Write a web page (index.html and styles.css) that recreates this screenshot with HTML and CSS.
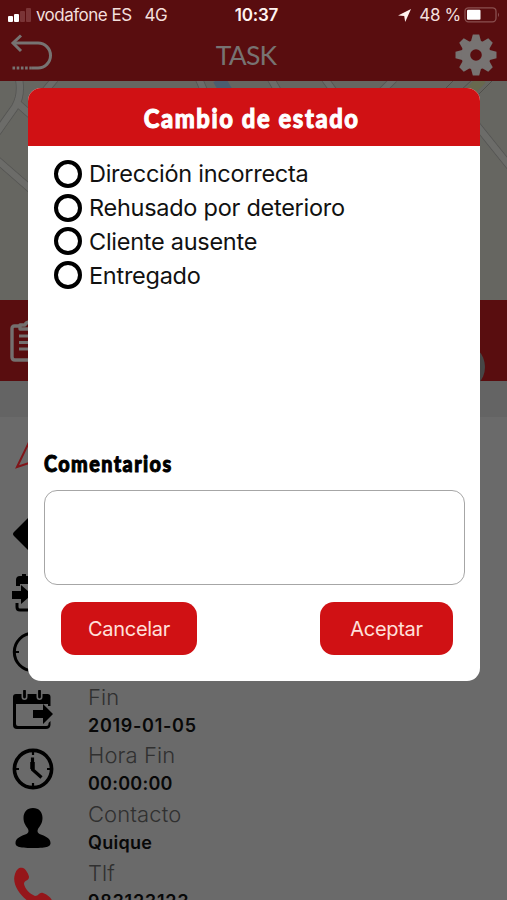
FILE: index.html
```html
<!DOCTYPE html>
<html lang="es">
<head>
<meta charset="UTF-8">
<meta name="viewport" content="width=device-width, initial-scale=1.0">
<title>Task - Cambio de estado</title>
<link rel="stylesheet" href="styles.css">
</head>
<body>

<div class="app">
  <header class="header">
    <div class="status-bar">
      <div class="status-left">
        <span class="signal"><i></i><i></i><i class="off"></i><i class="off"></i></span>
        <span class="carrier">vodafone ES</span>
        <span>4G</span>
      </div>
      <span class="time">10:37</span>
      <div class="status-right">
        <svg width="13" height="13" viewBox="0 0 13 13"><path d="M0 6.5 13 0 7.2 13 6.2 7z" fill="#fff3ef"/></svg>
        <span class="percent">48 %</span>
        <svg width="36" height="16" viewBox="0 0 36 16">
          <rect x="1" y=".8" width="31" height="14" rx="3.5" fill="none" stroke="#8a5050" stroke-width="1.3"/>
          <rect x="3" y="2.8" width="13.5" height="10" rx="1" fill="#fff"/>
          <path d="M34 5.5q2 2.3 0 4.6z" fill="#8a5050"/>
        </svg>
      </div>
    </div>
    <div class="nav-bar">
      <svg class="back" width="44" height="38" viewBox="0 0 44 38" fill="none" stroke="#777372" stroke-width="3">
        <path d="M3 9H28A12.5 12.5 0 0 1 28 34H22"/>
        <path d="M11 1.5 3 9l8 8"/>
        <path d="M2.5 34H23" stroke-dasharray="2.6 1.6"/>
      </svg>
      <h1>TASK</h1>
      <svg class="gear" width="42" height="42" viewBox="-21 -21 42 42">
        <g fill="#777372">
          <path id="tooth" d="M-5.500-12-3.200-20.500H3.200L5.500-12z"/>
          <use href="#tooth" transform="rotate(45)"/>
          <use href="#tooth" transform="rotate(90)"/>
          <use href="#tooth" transform="rotate(135)"/>
          <use href="#tooth" transform="rotate(180)"/>
          <use href="#tooth" transform="rotate(225)"/>
          <use href="#tooth" transform="rotate(270)"/>
          <use href="#tooth" transform="rotate(315)"/>
        </g>
        <circle r="10.3" fill="none" stroke="#777372" stroke-width="9"/>
      </svg>
    </div>
  </header>

  <svg class="map" width="507" height="219" viewBox="0 0 507 219" fill="none">
    <g stroke="#555553" stroke-width="8">
      <path d="M19-2Q22 14 15 26L-4 53M16 21 40 42M55-2 40 16M-4 78 42 118M475 42 512 88M199-2l6 14M271-2l8 14M325-2l10 14M394-2l-14 14"/>
    </g>
    <g stroke="#6c6c69" stroke-width="6.4">
      <path d="M19-2Q22 14 15 26L-4 53M16 21 40 42M55-2 40 16M-4 78 42 118M475 42 512 88M199-2l6 14M271-2l8 14M325-2l10 14M394-2l-14 14"/>
    </g>
    <path d="M219-2l8 14" stroke="#4a5e70" stroke-width="13"/>
    <path d="M482-2 467 14" stroke="#68694f" stroke-width="10"/>
    <path d="M494-2 477 15M473-2 460 10M455-2 443 10" stroke="#504f4b"/>
  </svg>

  <div class="tab-bar">
    <svg width="42" height="44" viewBox="0 0 42 44" fill="none" stroke="#74706f" stroke-width="3.4" stroke-linejoin="round">
      <path d="M10 6H4.5Q2 6 2 8.5V37q0 3 3 3H34q3 0 3-3V8.500Q37 6 34 6H30"/>
      <path d="M10 9V5H15Q16 2 20 2t5 3h5v4z"/>
      <path d="M9 16H30M9 22.500H30M9 29H30" stroke-width="2.8"/>
    </svg>
    <span class="bubble"></span>
  </div>
  <div class="section-gap"></div>

  <ul class="details">
    <li class="first">
      <svg width="42" height="42" viewBox="0 0 42 42"><path d="M5 36 20 5l15 31-15-5z" fill="none" stroke="#801519" stroke-width="2"/></svg>
    </li>
    <li>
      <svg width="42" height="42" viewBox="0 0 42 42"><path d="M2 19 19 2q2-2 4 0l17 17q2 2 0 4L23 40q-2 2-4 0L2 23q-2-2 0-4z"/></svg>
    </li>
    <li>
      <svg width="42" height="42" viewBox="0 0 42 42">
        <path d="M4 14V8q0-4 4-4h2V2h4v2h22q4 0 4 4v8H16v-4H8v2z"/>
        <path d="M5 31v4q0 3 3 3h29" fill="none" stroke="#000" stroke-width="3"/>
        <path d="M0 19H9V13L20 22.500 9 32V27H0z"/>
      </svg>
    </li>
    <li>
      <svg width="42" height="42" viewBox="0 0 42 42" fill="none" stroke="#000">
        <circle cx="21" cy="21" r="18.7" stroke-width="3"/>
        <path d="M21 9v13l8 8" stroke-width="3"/>
        <path d="M2 21h5M35 21h5" stroke-width="2"/>
      </svg>
    </li>
    <li>
      <svg width="42" height="42" viewBox="0 0 42 42">
        <path d="M38.500 16V7q0-3-3-3H4Q1 4 1 7V35q0 4 4 4H34q4 0 4.500-4v-4l-2 2v1q0 2-2 2H6q-2 0-2-2V14H36v2z"/>
        <path d="M12.500 0v7M27.500 0v7" stroke="#6a6a6a" stroke-width="6" stroke-linecap="round"/>
        <path d="M12.500 1v6M27.500 1v6" stroke="#000" stroke-width="2.800" stroke-linecap="round"/>
        <path d="M21 20H31V14L41 24 31 34V28H21z"/>
      </svg>
      <div class="info"><span>Fin</span><b class="date">2019-01-05</b></div>
    </li>
    <li>
      <svg width="42" height="42" viewBox="0 0 42 42" fill="none" stroke="#000">
        <circle cx="21" cy="21" r="18.600" stroke-width="3.600"/>
        <path d="M21 3v4M21 35v4M3 21h4M35 21h4" stroke-width="2.200"/>
        <path d="M20.500 9.500V21.500L29.500 29.500" stroke-width="3.200"/>
        <path d="M20.500 14v7" stroke-width="4.500"/>
      </svg>
      <div class="info"><span>Hora Fin</span><b>00:00:00</b></div>
    </li>
    <li>
      <svg width="42" height="42" viewBox="0 0 42 42">
        <path d="M21 1c-6 0-9.500 4-9.500 10 0 5 2.500 8 4.500 11 1 2 .5 4-1.500 5C9 29 3.500 31 3.500 36c0 3 2 5 17.500 5s17.500-2 17.500-5c0-5-5.500-7-11-9-2-1-2.500-3-1.500-5 2-3 4.500-6 4.500-11C30.500 5 27 1 21 1z"/>
      </svg>
      <div class="info"><span>Contacto</span><b>Quique</b></div>
    </li>
    <li>
      <svg width="42" height="42" viewBox="0 0 42 42">
        <path d="M3 8C5 2 8 1 11 2c3 1 6 7 6 9 0 4-5 3-5 7 1 5 6 10 11 12 4 0 4-4 8-3 3 1 9 5 9 8 0 4-5 6-8 6C17 41-2 22 3 8z" fill="#95161a"/>
      </svg>
      <div class="info"><span>Tlf</span><b class="date">983123123</b></div>
    </li>
  </ul>
</div>

<!-- Modal cambio de estado -->
<div class="modal">
  <div class="modal-title"><h2>Cambio de estado</h2></div>
  <div class="modal-body">
    <div class="options">
      <label><i class="radio"></i>Dirección incorrecta</label>
      <label><i class="radio"></i>Rehusado por deterioro</label>
      <label><i class="radio"></i>Cliente ausente</label>
      <label><i class="radio"></i>Entregado</label>
    </div>
    <h3>Comentarios</h3>
    <textarea></textarea>
    <div class="buttons">
      <button class="cancel">Cancelar</button>
      <button class="accept">Aceptar</button>
    </div>
  </div>
</div>

</body>
</html>
```
FILE: styles.css
```css
:root {
  --red: #d01114;
  --dark-red: #590d0f;
  --grey: #6a6a6a;
}

* {
  box-sizing: border-box;
}

body {
  margin: 0;
  height: 900px;
  overflow: hidden;
  font-family: Inter, "Liberation Sans", sans-serif;
  background: var(--grey);
}

svg {
  display: block;
  flex: none;
}

.app {
  height: 900px;
  overflow: hidden;
}

.header {
  height: 81px;
  background: var(--dark-red);
}

.status-bar {
  display: grid;
  grid-template-columns: 1fr auto 1fr;
  align-items: center;
  height: 30px;
  padding: 0 7px 0 8px;
  color: #f3dfdc;
  font-size: 17px;
}

.status-left,
.status-right {
  display: flex;
  align-items: center;
}

.status-left {
  letter-spacing: -.5px;
}

.status-right {
  justify-content: flex-end;
  letter-spacing: -.3px;
}

.carrier {
  margin: 0 13px 0 5px;
}

.time {
  margin-left: 5px;
  font-weight: 600;
  letter-spacing: -.2px;
  color: #fff3ef;
}

.percent {
  margin: 0 3px 0 8px;
}

.signal {
  display: flex;
  align-items: flex-end;
  gap: 1.5px;
  height: 14px;
}

.signal i {
  width: 4.6px;
  height: 6px;
  border-radius: 1px;
  background: #fff;
}

.signal i:nth-child(2) { height: 8px; }
.signal i:nth-child(3) { height: 11px; }
.signal i:nth-child(4) { height: 14px; }

.signal .off {
  background: #7a3436;
}

.nav-bar {
  display: grid;
  grid-template-columns: 1fr auto 1fr;
  align-items: center;
  height: 50px;
  padding: 0 10px;
}

.nav-bar .back {
  margin-bottom: 5px;
}

.nav-bar h1 {
  margin: 0 15px 0 0;
  font: 400 26.5px Lato, sans-serif;
  color: #777372;
  letter-spacing: -.8px;
}

.gear {
  justify-self: end;
}

.map {
  background: #666661;
}

.tab-bar {
  position: relative;
  height: 81px;
  padding: 20px 10px;
  background: var(--dark-red);
}

.bubble {
  position: absolute;
  right: 22px;
  top: 43px;
  width: 48px;
  height: 48px;
  border-radius: 50%;
  background: #464646;
}

.section-gap {
  height: 36px;
  background: #646464;
}

.details {
  margin: 0;
  padding: 1px 0 0;
  list-style: none;
}

.details li {
  display: flex;
  align-items: center;
  height: 58.75px;
  padding-left: 12px;
}

.details .first {
  height: 87px;
  padding: 0 0 20px 12px;
}

.info {
  display: flex;
  flex-direction: column;
  margin-left: 34px;
}

.info span {
  font-size: 22px;
  font-weight: 300;
  line-height: 29px;
  letter-spacing: .1px;
  color: #303030;
}

.info b {
  font-size: 18px;
  font-weight: 600;
  line-height: 27px;
  letter-spacing: .25px;
  color: #080808;
}

.info .date {
  letter-spacing: .7px;
}

/* modal */
.modal {
  position: absolute;
  top: 88px;
  left: 28px;
  width: 452px;
  height: 593px;
  border-radius: 13px;
  overflow: hidden;
  background: #fff;
}

.modal-title {
  display: flex;
  align-items: center;
  justify-content: center;
  height: 58px;
  padding-right: 4px;
  background: var(--red);
}

.modal-title h2,
.modal-body h3 {
  margin: 0;
  font-family: Lato, sans-serif;
  font-weight: 900;
  white-space: nowrap;
}

.modal-title h2 {
  font-size: 27px;
  letter-spacing: 1.8px;
  color: #fff;
  -webkit-text-stroke: 1px #fff;
  transform: scaleX(.88);
}

.modal-body {
  padding: 11px 15px 0 16px;
}

.options {
  height: 290px;
  padding-left: 10px;
}

.options label {
  display: flex;
  align-items: center;
  gap: 7px;
  height: 33.8px;
  font-size: 23.5px;
  letter-spacing: -.27px;
  color: #111;
}

.radio {
  width: 28px;
  height: 28px;
  border: 4px solid #000;
  border-radius: 50%;
}

.modal-body h3 {
  height: 43px;
  line-height: 33px;
  font-size: 22.5px;
  letter-spacing: 1.6px;
  color: #000;
  -webkit-text-stroke: 1px #000;
  transform: scaleX(.88);
  transform-origin: left;
}

textarea {
  display: block;
  width: 100%;
  height: 95px;
  border: 1.5px solid #a6a6a6;
  border-radius: 13px;
  background: #fff;
  resize: none;
}

.buttons {
  display: flex;
  justify-content: space-between;
  padding: 17px 12px 0 17px;
}

.buttons button {
  width: 136px;
  height: 53px;
  border: 0;
  border-radius: 14px;
  background: var(--red);
  color: #ffe0db;
  font: 400 20px Inter, sans-serif;
  letter-spacing: -.3px;
}

.buttons .accept {
  width: 133px;
}
```
